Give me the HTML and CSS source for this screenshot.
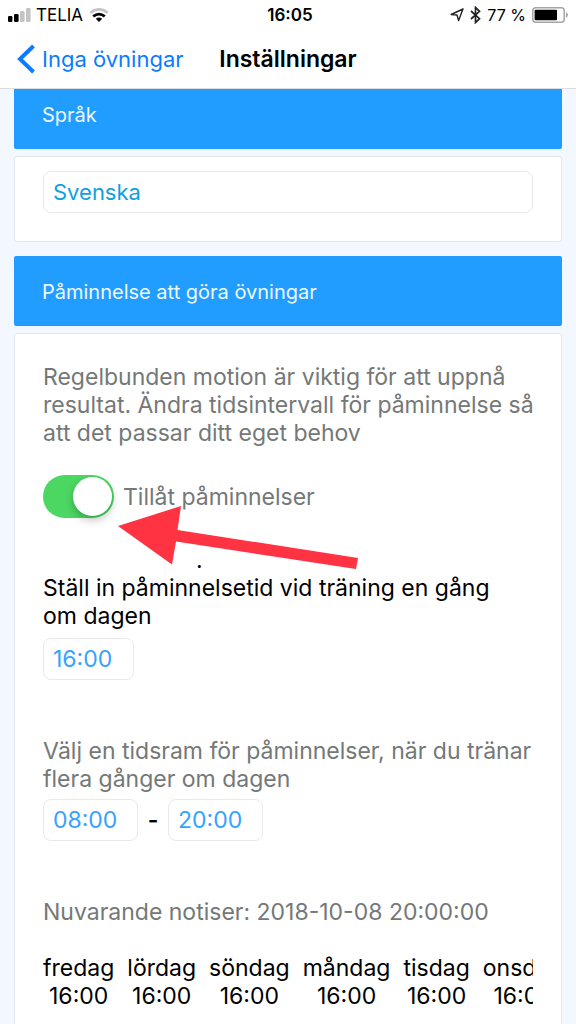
FILE: index.html
```html
<!DOCTYPE html>
<html lang="sv">
<head>
<meta charset="utf-8">
<meta name="viewport" content="width=device-width, initial-scale=1">
<title>Inställningar</title>
<link rel="stylesheet" href="styles.css">
</head>
<body>
<div class="status">
  <div class="status-left">
    <svg class="signal" width="23" height="14" viewBox="0 0 23 14" aria-hidden="true"><rect x="0" y="8" width="4.4" height="6" rx="1.3"/><rect x="6" y="6" width="4.6" height="8" rx="1.3"/><rect class="dim" x="12" y="3" width="4.6" height="11" rx="1.3"/><rect class="dim" x="18" y="0" width="4.6" height="14" rx="1.3"/></svg>
    <span>TELIA</span>
    <svg class="wifi" width="20" height="14" viewBox="0 0 20 14" aria-hidden="true"><path class="dim-line" d="M1.2 4.8Q10-2 18.800 4.800"/><path class="line" d="M4.200 8.400Q10 3.800 15.800 8.400"/><path d="M6.800 10.800Q10 8.400 13.200 10.800L10 14z"/></svg>
  </div>
  <strong class="clock">16:05</strong>
  <div class="status-right">
    <svg width="14" height="14" viewBox="0 0 14 14" aria-hidden="true"><path class="thin" d="M13 1L1.200 6.500L7 7L8.600 12.600z"/></svg>
    <svg width="11" height="18" viewBox="0 0 11 18" aria-hidden="true"><path class="rune" d="M1 5L9.500 12.700L5.500 16.500V1.500L9.500 5.300L1 13"/></svg>
    <span class="percent">77 %</span>
    <svg width="37" height="16" viewBox="0 0 37 16" aria-hidden="true"><rect class="battery-shell" x=".8" y=".8" width="31.400" height="14.400" rx="3"/><rect x="2.600" y="2.800" width="22.400" height="10.400" rx="1"/><path class="battery-tip" d="M34 5Q38 8 34 11z"/></svg>
  </div>
</div>
<header class="nav">
  <a class="back" href="#"><svg width="18" height="30" viewBox="0 0 18 30" aria-hidden="true"><path d="M16.500 2L3 15L16.500 28"/></svg>Inga övningar</a>
  <h1 class="title">Inställningar</h1>
</header>
<main class="scroll">
  <div class="content">
    <h2 class="section-head" id="language">Språk</h2>
    <section class="card card-language">
      <select class="field field-wide" aria-labelledby="language"><option>Svenska</option></select>
    </section>
    <h2 class="section-head section-next">Påminnelse att göra övningar</h2>
    <section class="card card-reminder">
      <p class="muted intro">Regelbunden motion är viktig för att uppnå resultat. Ändra tidsintervall för påminnelse så att det passar ditt eget behov</p>
      <div class="allow">
        <input class="switch" type="checkbox" id="allow" checked>
        <label for="allow">Tillåt påminnelser</label>
        <svg class="arrow" width="240" height="60" viewBox="0 0 240 60" aria-hidden="true"><path d="M0 1L63-19L59.500 5L240 33L238 44L58 16.500L54 39.500z"/></svg>
      </div>
      <p class="dot">.</p>
      <label class="prompt" for="once">Ställ in påminnelsetid vid träning en gång om dagen</label>
      <input class="field field-time" type="text" id="once" value="16:00">
      <p class="muted frame-text" id="frame">Välj en tidsram för påminnelser, när du tränar flera gånger om dagen</p>
      <div class="range" role="group" aria-labelledby="frame">
        <input class="field field-time field-range" type="text" aria-label="Från" value="08:00">
        <span class="dash">-</span>
        <input class="field field-time field-range" type="text" aria-label="Till" value="20:00">
      </div>
      <p class="muted current">Nuvarande notiser: 2018-10-08 20:00:00</p>
      <div class="table-wrap">
        <table class="days">
          <thead><tr><th>fredag</th><th>lördag</th><th>söndag</th><th>måndag</th><th>tisdag</th><th>onsdag</th></tr></thead>
          <tbody><tr><td>16:00</td><td>16:00</td><td>16:00</td><td>16:00</td><td>16:00</td><td>16:00</td></tr></tbody>
        </table>
      </div>
    </section>
  </div>
</main>
</body>
</html>
```
FILE: styles.css
```css
* { box-sizing: border-box; }
body {
  margin: 0;
  height: 100vh;
  display: flex;
  flex-direction: column;
  background: #f3f7ff;
  color: #000;
  font: 23px/28px Inter, "Liberation Sans", sans-serif;
}
h1, h2, p { margin: 0; }
.status, .nav {
  flex: none;
  display: grid;
  grid-template-columns: 1fr auto 1fr;
  align-items: center;
  background: #fff;
}
.status { height: 29px; padding: 0 7px; font-size: 17px; }
.status-left, .status-right { display: flex; align-items: center; gap: 5px; }
.status-left { padding-left: 1px; }
.status-left .wifi { margin-left: 1px; }
.status-right { justify-content: flex-end; gap: 6px; }
.percent { font-size: 16px; }
.clock { padding-left: 4px; font-weight: 600; }
.dim { fill: #c4c4c4; }
.line, .dim-line { fill: none; stroke: #000; stroke-width: 2.8; }
.dim-line { stroke: #c4c4c4; }
.thin { fill: none; stroke: #222; stroke-width: 1.4; stroke-linejoin: round; }
.rune { fill: none; stroke: #222; stroke-width: 1.7; }
.battery-shell { fill: #fff; stroke: #a5a5a5; stroke-width: 1.5; }
.battery-tip { fill: #a5a5a5; }
.nav { height: 60px; padding: 0 17px; border-bottom: 1px solid #dcdce2; }
.back { display: flex; align-items: center; gap: 7px; color: #0a7cff; font-size: 22px; text-decoration: none; white-space: nowrap; }
.back path { fill: none; stroke: #0a7cff; stroke-width: 4; }
.title { font-size: 23px; line-height: 28px; font-weight: 600; }
.scroll { flex: 1; min-height: 0; overflow-y: auto; scrollbar-width: none; }
.content { margin-top: -10px; padding: 0 14px; }
.section-head {
  padding: 22px 28px 20px;
  background: #219dff;
  border-radius: 2px;
  color: #eef8ff;
  font-size: 20px;
  line-height: 28px;
  font-weight: 400;
}
.section-next { margin-top: 14px; }
.card { margin-top: 7px; padding: 28px; background: #fff; border: 1px solid #e3e7ec; border-radius: 3px; }
.card-language { padding-top: 14px; }
.card-reminder { padding-top: 29px; }
.field {
  display: block;
  height: 42px;
  padding: 0 9px;
  appearance: none;
  background: #fff;
  border: 1px solid #e9e9e9;
  border-radius: 8px;
  color: #36a2ff;
  font: inherit;
}
.field-wide { width: 100%; color: #109fe0; font-size: 22px; }
.field-time { width: 91px; }
.field-range { width: 95px; }
.muted, .allow { color: #747877; }
.intro { margin-right: -8px; }
.allow { position: relative; display: flex; align-items: center; gap: 9px; margin-top: 28px; }
.switch {
  flex: none;
  width: 71px;
  height: 43px;
  margin: 0;
  padding: 2px;
  appearance: none;
  background: #ddd;
  border-radius: 22px;
}
.switch::before {
  content: "";
  display: block;
  width: 39px;
  height: 39px;
  background: #fff;
  border-radius: 50%;
  box-shadow: 0 4px 8px rgba(0, 0, 0, .25);
}
.switch:checked { background: #4cd762; }
.switch:checked::before { margin-left: auto; }
.arrow { position: absolute; left: 75px; top: 50px; overflow: visible; pointer-events: none; fill: #ff3341; }
.dot { margin-top: 28px; padding-left: 153px; }
.prompt { display: block; margin-bottom: 8px; padding-right: 28px; }
.frame-text { margin: 57px 0 6px; }
.range { display: flex; align-items: center; }
.dash { width: 30px; text-align: center; font-weight: 600; }
.current { margin-top: 57px; }
.table-wrap { margin-top: 28px; overflow-x: auto; scrollbar-width: none; }
.days { border-collapse: collapse; }
.days th, .days td { padding: 0 13px 0 0; font-weight: 400; text-align: center; }
```
